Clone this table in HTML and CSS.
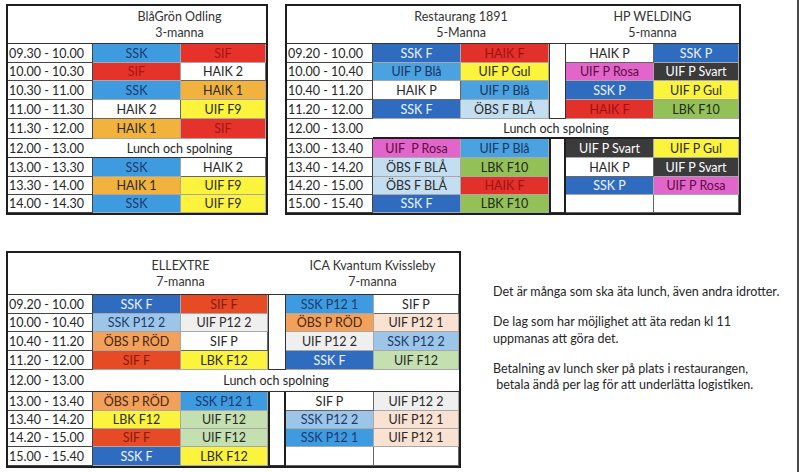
FILE: index.html
```html
<!DOCTYPE html>
<html lang="sv">
<head>
<meta charset="utf-8">
<title>Lunchschema</title>
<link rel="stylesheet" href="styles.css">
</head>
<body>
<div class="page">
  <div class="top">
    <div class="tbl t1">
      <div class="h hb"></div>
      <div class="h hs2">BlåGrön Odling<span>3-manna</span></div>

      <div class="tm">09.30 - 10.00</div><div class="c ssk">SSK</div><div class="c sif">SIF</div>
      <div class="tm">10.00 - 10.30</div><div class="c sif">SIF</div><div class="c wh">HAIK 2</div>
      <div class="tm">10.30 - 11.00</div><div class="c ssk">SSK</div><div class="c org">HAIK 1</div>
      <div class="tm">11.00 - 11.30</div><div class="c wh">HAIK 2</div><div class="c yel">UIF F9</div>
      <div class="tm">11.30 - 12.00</div><div class="c org">HAIK 1</div><div class="c sif">SIF</div>
      <div class="tm nl">12.00 - 13.00</div><div class="lunch">Lunch och spolning</div>
      <div class="tm">13.00 - 13.30</div><div class="c ssk">SSK</div><div class="c wh">HAIK 2</div>
      <div class="tm">13.30 - 14.00</div><div class="c org">HAIK 1</div><div class="c yel">UIF F9</div>
      <div class="tm">14.00 - 14.30</div><div class="c ssk">SSK</div><div class="c yel">UIF F9</div>
    </div>

    <div class="tbl t2">
      <div class="h hb"></div>
      <div class="h hs2">Restaurang 1891<span>5-Manna</span></div>
      <div class="h hb"></div>
      <div class="h hs2">HP WELDING<span>5-manna</span></div>

      <div class="gap gap-up"></div>
      <div class="gap gap-down"></div>

      <div class="tm">09.20 - 10.00</div><div class="c dkb">SSK F</div><div class="c red">HAIK F</div><div class="c wh">HAIK P</div><div class="c dkb">SSK P</div>
      <div class="tm">10.00 - 10.40</div><div class="c blu">UIF P Blå</div><div class="c yel">UIF P Gul</div><div class="c pnk">UIF P Rosa</div><div class="c blk">UIF P Svart</div>
      <div class="tm">10.40 - 11.20</div><div class="c wh">HAIK P</div><div class="c blu">UIF P Blå</div><div class="c dkb">SSK P</div><div class="c yel">UIF P Gul</div>
      <div class="tm">11.20 - 12.00</div><div class="c dkb">SSK F</div><div class="c pale">ÖBS F BLÅ</div><div class="c red">HAIK F</div><div class="c grn">LBK F10</div>
      <div class="tm nl">12.00 - 13.00</div><div class="lunch lunch-bold">Lunch och spolning</div>
      <div class="tm">13.00 - 13.40</div><div class="c pnk">UIF&nbsp; P Rosa</div><div class="c blu">UIF P Blå</div><div class="c blk">UIF P Svart</div><div class="c yel">UIF P Gul</div>
      <div class="tm">13.40 - 14.20</div><div class="c pale">ÖBS F BLÅ</div><div class="c grn">LBK F10</div><div class="c wh">HAIK P</div><div class="c blk">UIF P Svart</div>
      <div class="tm">14.20 - 15.00</div><div class="c pale">ÖBS F BLÅ</div><div class="c red">HAIK F</div><div class="c dkb">SSK P</div><div class="c pnk">UIF P Rosa</div>
      <div class="tm">15.00 - 15.40</div><div class="c dkb">SSK F</div><div class="c grn">LBK F10</div><div class="c wh"></div><div class="c wh"></div>
    </div>
  </div>

  <div class="bottom">
    <div class="tbl t3">
      <div class="h hb"></div>
      <div class="h hs2">ELLEXTRE<span>7-manna</span></div>
      <div class="h hb"></div>
      <div class="h hs2">ICA Kvantum Kvissleby<span>7-manna</span></div>

      <div class="gap gap-up"></div>
      <div class="gap gap-down"></div>

      <div class="tm">09.20 - 10.00</div><div class="c dkb">SSK F</div><div class="c sifo">SIF F</div><div class="c ssk">SSK P12 1</div><div class="c wh">SIF P</div>
      <div class="tm">10.00 - 10.40</div><div class="c lbl">SSK P12 2</div><div class="c gry">UIF P12 2</div><div class="c orn">ÖBS P RÖD</div><div class="c pch">UIF P12 1</div>
      <div class="tm">10.40 - 11.20</div><div class="c orn">ÖBS P RÖD</div><div class="c wh">SIF P</div><div class="c gry">UIF P12 2</div><div class="c lbl">SSK P12 2</div>
      <div class="tm">11.20 - 12.00</div><div class="c sifo">SIF F</div><div class="c yel">LBK F12</div><div class="c dkb">SSK F</div><div class="c lgr">UIF F12</div>
      <div class="tm nl">12.00 - 13.00</div><div class="lunch">Lunch och spolning</div>
      <div class="tm">13.00 - 13.40</div><div class="c orn">ÖBS P RÖD</div><div class="c ssk">SSK P12 1</div><div class="c wh">SIF P</div><div class="c gry">UIF P12 2</div>
      <div class="tm">13.40 - 14.20</div><div class="c yel">LBK F12</div><div class="c lgr">UIF F12</div><div class="c lbl">SSK P12 2</div><div class="c pch">UIF P12 1</div>
      <div class="tm">14.20 - 15.00</div><div class="c sifo">SIF F</div><div class="c lgr">UIF F12</div><div class="c ssk">SSK P12 1</div><div class="c pch">UIF P12 1</div>
      <div class="tm">15.00 - 15.40</div><div class="c dkb">SSK F</div><div class="c yel">LBK F12</div><div class="c wh"></div><div class="c wh"></div>
    </div>

    <div class="notes">
      <p>Det är många som ska äta lunch, även andra idrotter.</p>
      <p>De lag som har möjlighet att äta redan kl 11<br>uppmanas att göra det.</p>
      <p>Betalning av lunch sker på plats i restaurangen,<br>&nbsp;betala ändå per lag för att underlätta logistiken.</p>
    </div>
  </div>
</div>
</body>
</html>
```

FILE: styles.css
```css
* { box-sizing: border-box; margin: 0; padding: 0; }

body {
  margin: 0;
  background: #ffffff;
  font-family: Lato, "Noto Sans", sans-serif;
  font-size: 12.5px;
  color: #262626;
}

.page {
  width: 799px;
  height: 472px;
  border-right: 2px solid #4a4a4a;
  padding: 4px 0 0 6px;
}

.top {
  display: flex;
  align-items: flex-start;
  gap: 17px;
}

.bottom {
  display: flex;
  align-items: flex-start;
  margin-top: 36px;
}

.tbl {
  display: grid;
  border: 2px solid #1e1e1e;
  background: #fff;
}

.t1 {
  grid-template-columns: 85px 88px 85px;
  grid-template-rows: 38px 19px 18px 19px 19px 20px 19px 19px 18px 18px;
}

.t2 {
  grid-template-columns: 86px 88px 88px 17px 88px 85px;
  grid-template-rows: 38px 19px 18px 19px 19px 20px 19px 19px 18px 18px;
}

.t3 {
  grid-template-columns: 85px 88px 87px 18px 88px 85px;
  grid-template-rows: 42px 19px 18px 19px 19px 22px 19px 18px 18px 19px;
}

/* header */
.h {
  border-bottom: 1px solid #333;
}
.hs2 {
  grid-column: span 2;
  display: flex;
  flex-direction: column;
  align-items: center;
  justify-content: center;
  line-height: 16px;
  color: #333;
}
.hs2 span { display: block; }

/* time cells */
.tm {
  display: flex;
  align-items: center;
  padding-left: 1px;
  border-right: 1px solid #444;
  border-bottom: 1px solid #444;
  white-space: nowrap;
  color: #262626;
}
.tm.nl {
  border-right: none;
  border-bottom: 1px solid #333;
}

/* data cells */
.c {
  display: flex;
  align-items: center;
  justify-content: center;
  border-right: 1px solid #a8a8a8;
  border-bottom: 1px solid #a8a8a8;
  white-space: nowrap;
}

.lunch {
  grid-column: 2 / -1;
  display: flex;
  align-items: center;
  justify-content: center;
  border-bottom: 1px solid #333;
  color: #262626;
}
.lunch-bold {
  border-bottom: 2px solid #1e1e1e;
}

/* spacer column between the two restaurants */
.gap {
  grid-column: 4;
  background: #fff;
  border-left: 1px solid #333;
  border-right: 1px solid #333;
  border-bottom: 1px solid #333;
}
.gap-up { grid-row: 2 / span 4; }
.gap-down {
  grid-row: 7 / span 4;
  border-left: 2px solid #1e1e1e;
  border-right: 2px solid #1e1e1e;
}

/* team colours */
.wh   { background: #ffffff; color: #262626; border-color: #666; }
.ssk  { background: #3f9be0; color: #1d3a6c; }
.sif  { background: #e5322a; color: #a81414; }
.sifo { background: #e64b26; color: #8c1a0e; }
.org  { background: #f2b33e; color: #2b2b2b; }
.yel  { background: #fbf33c; color: #2b2b2b; }
.dkb  { background: #2f6cbf; color: #eef3fb; }
.red  { background: #e2302a; color: #a01212; }
.blu  { background: #4aa2e0; color: #1b3460; }
.pale { background: #c3ddf1; color: #2b2b2b; }
.pnk  { background: #e265cb; color: #5c0e3e; }
.grn  { background: #93c057; color: #1e2a1a; }
.blk  { background: #3b3b3b; color: #ffffff; }
.lbl  { background: #9cc5e8; color: #1d3a6c; }
.gry  { background: #efefef; color: #2b2b2b; }
.orn  { background: #f1a15a; color: #4a2610; }
.lgr  { background: #c4dfb0; color: #2b2b2b; }
.pch  { background: #fae2d3; color: #2b2b2b; }

/* notes */
.notes {
  margin-left: 32px;
  padding-top: 33px;
  line-height: 16.5px;
  color: #262626;
}
.notes p {
  margin-bottom: 13.5px;
  white-space: nowrap;
}
```
